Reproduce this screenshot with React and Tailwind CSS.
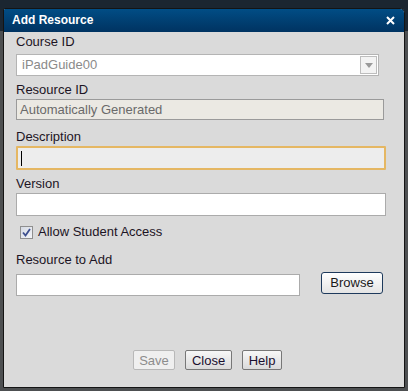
export default function App() {
  const font = { fontFamily: '"Liberation Sans", Arial, sans-serif' }
  return (
    <div
      className="w-[408px] h-[391px] overflow-hidden bg-[linear-gradient(#1b2631_0_31px,#4d4f51_31px)] pt-[8px] pl-[3px]"
      style={font}
    >
      <div className="flex h-[380px] w-[402px] flex-col overflow-hidden rounded-tr-[5px] rounded-tl-[2px] border border-[#141414] bg-[#dadada]">
        {/* title bar */}
        <div className="flex h-[23px] shrink-0 items-center justify-between bg-gradient-to-b from-[#014d85] to-[#003361] pl-[8px] pr-[9px]">
          <div className="-mt-[2px] text-[12px] font-bold text-white">Add Resource</div>
          <svg width="9" height="9" viewBox="0 0 9 9">
            <path d="M1 1 L8 8 M8 1 L1 8" stroke="#ffffff" strokeWidth="2" />
          </svg>
        </div>

        {/* body */}
        <div className="flex flex-1 flex-col pl-[12px] pt-[1px] text-[13px] text-[#1c1424]">
          <div className="h-[18px] leading-[18px]">Course ID</div>
          <div className="mt-[3px] flex h-[22px] w-[363px] items-center justify-between border border-[#b4b4b4] bg-white pl-[5px] pr-[1px]">
            <span className="text-[#8a8a8a]">iPadGuide00</span>
            <div className="flex h-[18px] w-[17px] items-center justify-center border border-[#bdbdbd] bg-[#f3f3f3]">
              <svg width="8" height="5" viewBox="0 0 8 5">
                <path d="M0 0 L8 0 L4 5 Z" fill="#9a9a9a" />
              </svg>
            </div>
          </div>

          <div className="mt-[5px] h-[18px] leading-[18px]">Resource ID</div>
          <div className="flex h-[21px] w-[368px] items-center border border-[#9a9a9a] bg-[#ebe9e3] pl-[3px] text-[#6a6a6a]">
            Automatically Generated
          </div>

          <div className="mt-[8px] h-[18px] leading-[18px]">Description</div>
          <div className="flex h-[24px] w-[370px] items-center rounded-[1px] border-2 border-[#e5b763] bg-[#ededed] pl-[3px]">
            <div className="h-[15px] w-[1px] bg-black" />
          </div>

          <div className="mt-[5px] h-[18px] leading-[18px]">Version</div>
          <div className="h-[23px] w-[370px] border border-[#ababab] bg-white" />

          <div className="mt-[7px] flex h-[18px] items-center pl-[4px]">
            <div className="flex h-[13px] w-[13px] items-center justify-center border border-[#8f8f8f] bg-gradient-to-br from-[#d5dae4] to-[#f4f5f8]">
              <svg width="9" height="9" viewBox="0 0 9 9">
                <path d="M1 4.5 L3.5 7.5 L8 1" stroke="#3d4f8f" strokeWidth="1.8" fill="none" />
              </svg>
            </div>
            <span className="ml-[5px] leading-[18px]">Allow Student Access</span>
          </div>

          <div className="mt-[10px] h-[18px] leading-[18px]">Resource to Add</div>
          <div className="mt-[5px] flex items-start">
            <div className="h-[22px] w-[284px] border border-[#ababab] bg-white" />
            <button className="ml-[21px] -mt-[2px] h-[22px] w-[62px] rounded-[3px] border border-[#1e3a5c] bg-gradient-to-b from-white to-[#e4e4e4] text-[13px] text-[#1a1a1a]">
              Browse
            </button>
          </div>

          {/* footer */}
          <div className="mt-auto mb-[17px] flex justify-center gap-[10px] pr-[5px]">
            <button className="h-[20px] w-[42px] rounded-[2px] border border-[#b8b8b8] bg-[#efefef] text-[13px] text-[#8c8c8c]">
              Save
            </button>
            <button className="h-[20px] w-[47px] rounded-[2px] border border-[#777777] bg-gradient-to-b from-[#f7f7f7] to-[#dadada] text-[13px] text-[#1a1030]">
              Close
            </button>
            <button className="h-[20px] w-[40px] rounded-[2px] border border-[#777777] bg-gradient-to-b from-[#f7f7f7] to-[#dadada] text-[13px] text-[#1a1030]">
              Help
            </button>
          </div>
        </div>
      </div>
    </div>
  )
}
